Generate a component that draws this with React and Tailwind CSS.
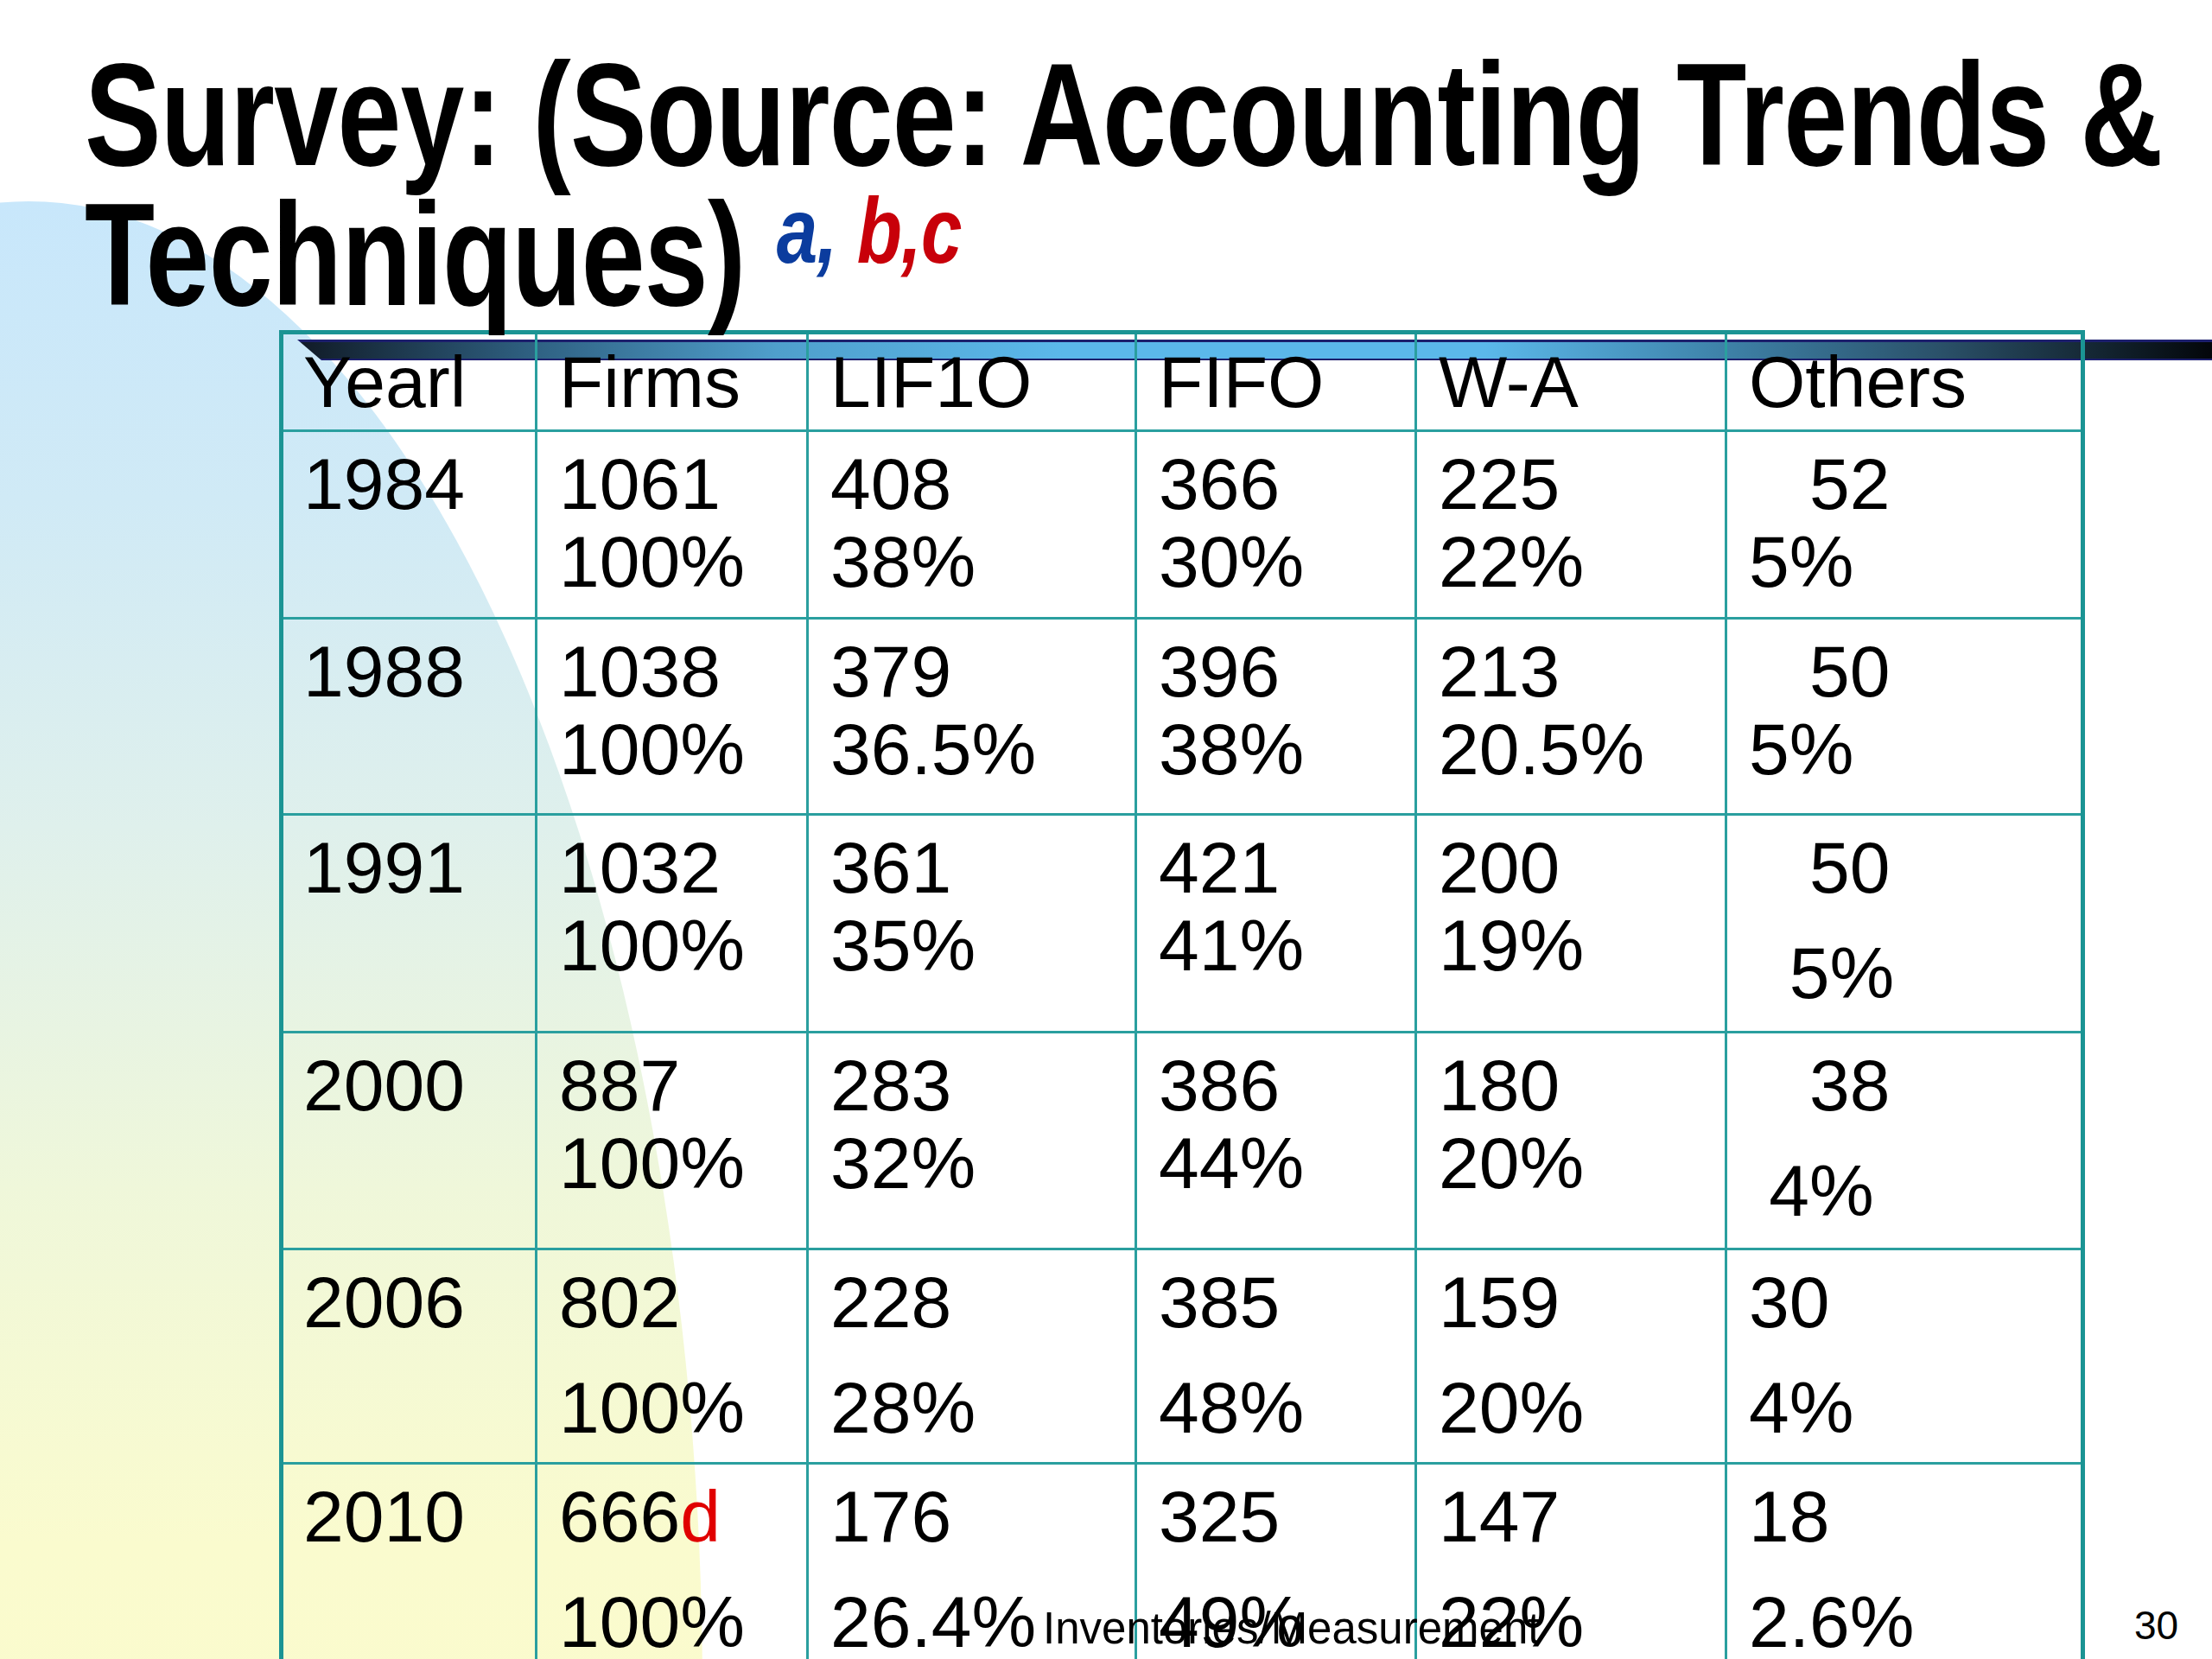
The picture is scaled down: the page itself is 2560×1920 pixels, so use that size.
import React from 'react';

const headers = ['Yearl', 'Firms', 'LIF1O', 'FIFO', 'W-A', 'Others'];

// each cell: [first line, second line, extra gap before second line]
const rows = [
  {
    h: 'h-[217px]',
    cells: [['1984'], ['1061', '100%'], ['408', '38%'], ['366', '30%'], ['225', '22%'], ['   52', '5%']],
  },
  {
    h: 'h-[227px]',
    cells: [['1988'], ['1038', '100%'], ['379', '36.5%'], ['396', '38%'], ['213', '20.5%'], ['   50', '5%']],
  },
  {
    h: 'h-[252px]',
    cells: [['1991'], ['1032', '100%'], ['361', '35%'], ['421', '41%'], ['200', '19%'], ['   50', '  5%', true]],
  },
  {
    h: 'h-[251px]',
    cells: [['2000'], ['887', '100%'], ['283', '32%'], ['386', '44%'], ['180', '20%'], ['   38', ' 4%', true]],
  },
  {
    h: 'h-[248px]',
    cells: [['2006'], ['802', '100%', true], ['228', '28%', true], ['385', '48%', true], ['159', '20%', true], ['30', '4%', true]],
  },
  {
    h: 'h-[260px]',
    cells: [
      ['2010'],
      [<>666<span className="text-[#e00000]">d</span></>, '100%', true],
      ['176', '26.4%', true],
      ['325', '49%', true],
      ['147', '22%', true],
      ['18', '2.6%', true],
    ],
  },
];

const cols = 'grid grid-cols-[291px_314px_380px_324px_359px_412px]';

const Cell = ({ idx, children, header }) => (
  <div
    className={
      (idx === 0 ? 'pl-[23px]' : 'border-l-[3px] border-[#2a9f9f] pl-[25px]') +
      (header ? ' pt-[10px]' : ' pt-[15px]')
    }
  >
    {children}
  </div>
);

export default function App() {
  return (
    <div className="relative w-[2560px] h-[1920px] overflow-hidden bg-white">
      {/* background blob */}
      <div className="absolute left-[-747px] top-[233px] w-[1560px] h-[3452px] rounded-[50%] bg-[linear-gradient(180deg,#c8e7fb_0%,#d0eaf6_10%,#dff0ec_21%,#eff7da_33%,#fafbce_45%,#fffcc6_100%)]" />
      {/* title rule */}
      <div className="absolute left-[344px] right-0 top-[393px] h-[24px] border-t-[3px] border-b-[2px] border-[#1c1f6c] bg-[linear-gradient(90deg,#101a26_0%,#2e5f80_12%,#4f9fcc_25%,#5bb8ea_40%,#5bb8ea_62%,#3f84ab_74%,#2a5068_86%,#03060a_100%)] [clip-path:polygon(0_0,100%_0,100%_100%,28px_100%)]" />

      <div className="relative">
        <div className="pl-[98px] pt-[52px]">
          <h1 className="w-max origin-left scale-x-[0.79] whitespace-nowrap text-[168px] leading-[162px] font-bold tracking-[-0.005em] text-black [font-family:'Liberation_Sans',Arial,sans-serif]">
            Survey: (Source: Accounting Trends &amp;
            <br />
            Techniques){' '}
            <span className="relative -top-[49px] text-[108px] leading-none italic">
              <span className="text-[#0b3c9e]">a,</span> <span className="text-[#c8000a]">b,c</span>
            </span>
          </h1>
        </div>

        <div className="ml-[323px] mt-[6px] w-[2090px] border-[5px] border-[#1b9494] text-[84px] leading-[90px] text-black [font-family:'Liberation_Sans',Arial,sans-serif]">
          <div className={`${cols} h-[110px]`}>
            {headers.map((h, i) => (
              <Cell key={h} idx={i} header>
                {h}
              </Cell>
            ))}
          </div>
          {rows.map((row, r) => (
            <div key={r} className={`${cols} ${row.h} border-t-[3px] border-[#2a9f9f]`}>
              {row.cells.map(([a, b, gap], i) => (
                <Cell key={i} idx={i}>
                  <div className="whitespace-pre">{a}</div>
                  {b && <div className={gap ? 'whitespace-pre mt-[32px]' : 'whitespace-pre'}>{b}</div>}
                </Cell>
              ))}
            </div>
          ))}
        </div>
      </div>

      {/* slide footer */}
      <div className="absolute left-[1207px] top-[1859px] text-[51px] leading-none text-black [font-family:'Liberation_Sans',Arial,sans-serif]">
        Inventories/Measurement
      </div>
      <div className="absolute left-[2470px] top-[1858px] text-[46px] leading-none text-black [font-family:'Liberation_Sans',Arial,sans-serif]">
        30
      </div>
    </div>
  );
}
